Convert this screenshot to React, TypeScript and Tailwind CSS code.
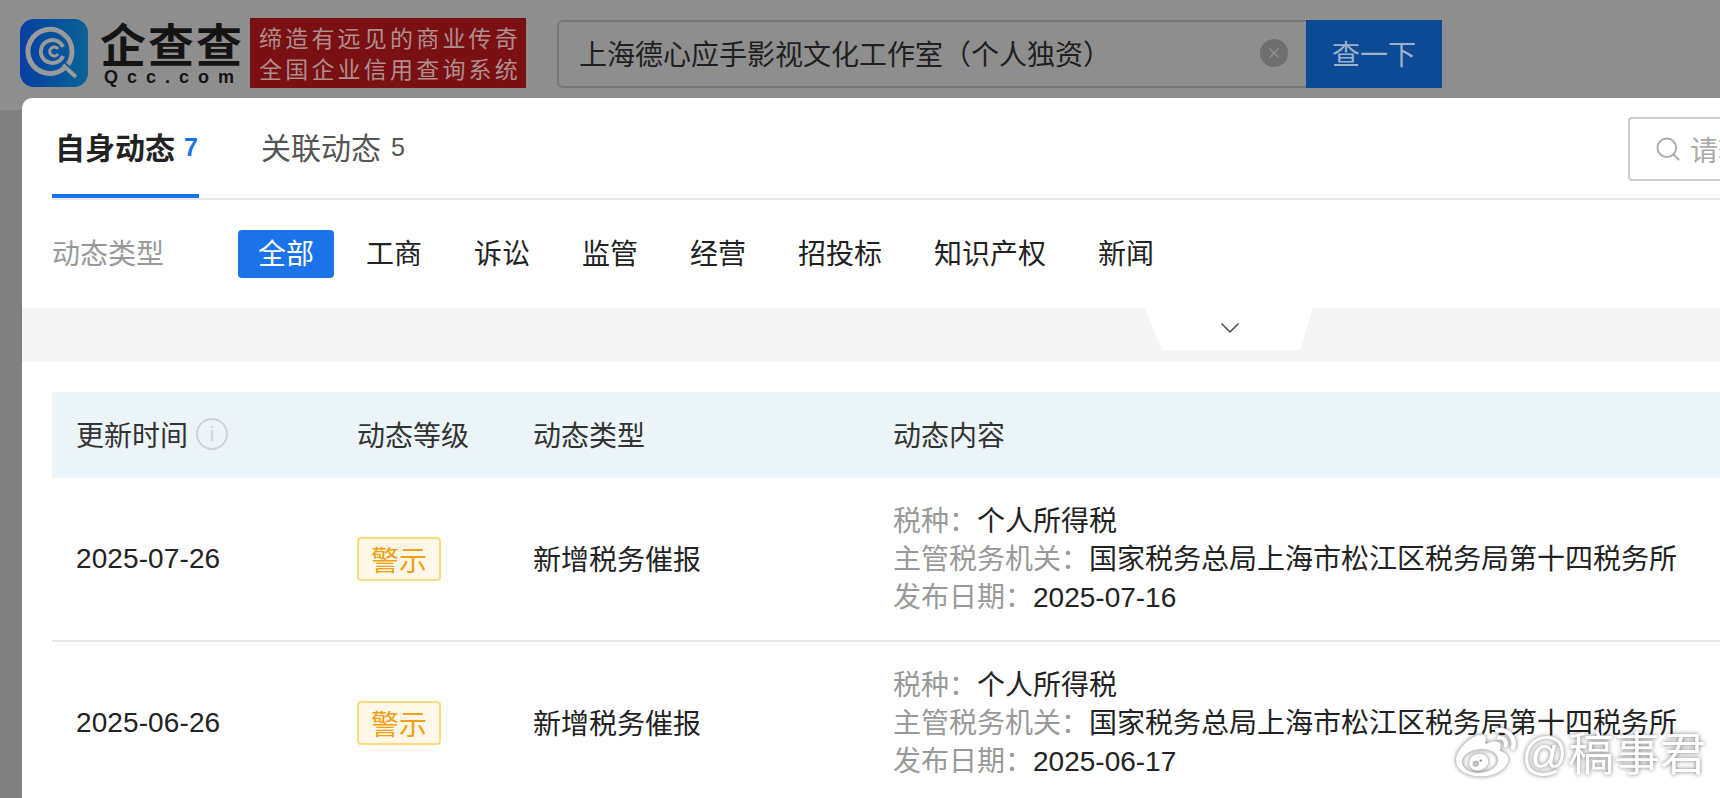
import React from 'react';
import { ChevronDown, Search, X } from 'lucide-react';
import { FaWeibo } from 'react-icons/fa';

const filters = ['全部', '工商', '诉讼', '监管', '经营', '招投标', '知识产权', '新闻'];

const rows = [
  { time: '2025-07-26', published: '2025-07-16' },
  { time: '2025-06-26', published: '2025-06-17' },
];

const LogoMark = () => (
  <div className="h-[68px] w-[68px] shrink-0 rounded-[14px] bg-gradient-to-r from-[#0a3ea3] to-[#0c6296]">
    <svg viewBox="0 0 68 68" className="h-full w-full" fill="none" stroke="#9a9a9a">
      <path d="M45 48.5A22 22 0 1 1 52 33a22 22 0 0 1-4 12.5" strokeWidth="5" />
      <path d="M43 37a11.5 11.5 0 1 1 0-9" strokeWidth="4" />
      <path d="M38 35a4.5 4.5 0 1 1 0-5" strokeWidth="3" />
      <path d="M43 46l13 12" strokeWidth="4" />
    </svg>
  </div>
);

const Header = () => (
  <header className="flex h-[110px] items-start bg-[#8e8e8e] pl-5 pt-[18px]">
    <div className="mt-px flex">
      <LogoMark />
      <div className="ml-3 flex w-[140px] flex-col">
        <div className="h-[46px] text-[46px] leading-[46px] font-bold tracking-[2px] whitespace-nowrap text-[#141414]">企查查</div>
        <div className="ml-[4px] mt-[3px] font-['Liberation_Sans',sans-serif] text-[18px] leading-[18px] font-bold tracking-[9px] whitespace-nowrap text-[#141414]">Qcc.com</div>
      </div>
    </div>
    <div className="ml-[10px] flex h-[70px] w-[276px] flex-col justify-center bg-[#7a0f14] pl-[9px] text-[23px] leading-[31px] tracking-[3.2px] whitespace-nowrap text-[#ae8f8f]">
      <div>缔造有远见的商业传奇</div>
      <div>全国企业信用查询系统</div>
    </div>
    <div className="ml-[31px] flex h-[70px] items-start">
      <div className="mt-[2px] flex h-[68px] w-[749px] items-center rounded-l-[6px] border-2 border-r-0 border-[#777777] pb-[2px] pl-[20px] pr-[18px]">
        <span className="flex-1 text-[28px] whitespace-nowrap text-[#1f1f1f]">上海德心应手影视文化工作室（个人独资）</span>
        <span className="flex h-[28px] w-[28px] items-center justify-center rounded-full bg-[#6f6f6f]">
          <X size={16} strokeWidth={2} className="text-[#929292]" />
        </span>
      </div>
      <div className="mt-[2px] flex h-[68px] w-[136px] items-center justify-center bg-[#0b4a94] pb-[2px] text-[28px] text-[#9fb0c8]">查一下</div>
    </div>
  </header>
);

const Tabs = () => (
  <div className="flex h-[102px] items-start border-b-2 border-[#e9e9e9]">
    <div className="flex h-[100px] w-[147px] shrink-0 items-center border-b-4 border-[#1a73e8] pl-[3px] whitespace-nowrap">
      <span className="text-[30px] font-bold text-[#222222]">自身动态</span>
      <span className="ml-[9px] mt-[4px] font-['Liberation_Sans',sans-serif] text-[25px] font-bold text-[#1a73e8]">7</span>
    </div>
    <div className="ml-[62px] flex h-[96px] w-[150px] shrink-0 items-center whitespace-nowrap">
      <span className="text-[30px] text-[#555555]">关联动态</span>
      <span className="ml-[10px] mt-[4px] font-['Liberation_Sans',sans-serif] text-[25px] text-[#555555]">5</span>
    </div>
    <div className="ml-[1217px] mt-[19px] flex h-[64px] w-[300px] shrink-0 items-center rounded-[4px] border-2 border-[#cccccc] pl-[24px]">
      <Search size={28} strokeWidth={1.6} className="shrink-0 text-[#a9a9a9]" />
      <span className="ml-[8px] text-[28px] whitespace-nowrap text-[#a9a9a9]">请输入关键词</span>
    </div>
  </div>
);

const FilterRow = () => (
  <div className="flex h-[108px] items-start pl-[30px] pt-[30px]">
    <div className="flex h-[48px] w-[186px] items-center pb-[4px] text-[28px] text-[#999999]">动态类型</div>
    <div className="flex gap-3">
      {filters.map((f, i) => (
        <div
          key={f}
          className={
            i === 0
              ? 'flex h-[48px] items-center rounded-[4px] bg-[#1a73e8] px-5 pb-[4px] text-[28px] text-white'
              : 'flex h-[48px] items-center px-5 pb-[4px] text-[28px] text-[#222222]'
          }
        >
          {f}
        </div>
      ))}
    </div>
  </div>
);

const ExpandBand = () => (
  <div className="relative h-[54px] bg-[#f5f5f5]">
    <svg viewBox="0 0 168 42" className="absolute left-[1123px] top-0 h-[42px] w-[168px]">
      <path d="M0 0H168L155 42H17Z" fill="#ffffff" />
    </svg>
    <ChevronDown size={32} strokeWidth={1.3} className="absolute left-[1192px] top-[4px] text-[#555555]" />
  </div>
);

const Info = () => (
  <span className="ml-[8px] flex h-[32px] w-[32px] items-center justify-center rounded-full border-2 border-[#cfd3d6] font-['Liberation_Sans',sans-serif] text-[20px] leading-none text-[#cfd3d6]">
    i
  </span>
);

const Table = () => (
  <div className="ml-[30px] mt-[30px]">
    <div className="flex h-[86px] items-center bg-[#ecf5f9] pb-[2px] text-[28px] text-[#333333]">
      <div className="flex w-[305px] items-center pl-[24px]">
        更新时间
        <Info />
      </div>
      <div className="w-[176px]">动态等级</div>
      <div className="w-[360px]">动态类型</div>
      <div>动态内容</div>
    </div>
    {rows.map((row) => (
      <div key={row.time} className="flex h-[164px] items-center border-b-2 border-[#e9e9e9] text-[28px] text-[#222222]">
        <div className="w-[305px] pl-[24px] font-['Liberation_Sans',sans-serif] tracking-[0.1px]">{row.time}</div>
        <div className="w-[176px]">
          <span className="flex h-[44px] w-[84px] items-center justify-center rounded-[4px] border-2 border-[#fddc80] bg-[#fff8e8] text-[28px] text-[#f0a010]">
            警示
          </span>
        </div>
        <div className="w-[360px] pb-[3px]">新增税务催报</div>
        <div className="pb-[2px] text-[28px] leading-[38px] whitespace-nowrap">
          <div>
            <span className="text-[#999999]">税种：</span>个人所得税
          </div>
          <div>
            <span className="text-[#999999]">主管税务机关：</span>国家税务总局上海市松江区税务局第十四税务所
          </div>
          <div>
            <span className="text-[#999999]">发布日期：</span>
            <span className="font-['Liberation_Sans',sans-serif]">{row.published}</span>
          </div>
        </div>
      </div>
    ))}
  </div>
);

const Watermark = () => (
  <div className="absolute bottom-[14px] right-[14px] flex items-center text-white drop-shadow-[0_0_2px_rgba(0,0,0,0.55)]">
    <FaWeibo size={60} />
    <span className="ml-[5px] font-['Liberation_Sans','Noto_Sans_CJK_SC',sans-serif] text-[46px] leading-[50px] whitespace-nowrap">@稿事君</span>
  </div>
);

export default function App() {
  return (
    <div className="relative h-[798px] w-[1720px] overflow-hidden bg-[#808080] font-['Noto_Sans_CJK_SC',sans-serif]">
      <Header />
      <div className="absolute left-[22px] right-0 top-[98px] h-[700px] overflow-hidden rounded-tl-[10px] bg-white">
        <div className="pl-[30px]">
          <Tabs />
        </div>
        <FilterRow />
        <ExpandBand />
        <Table />
      </div>
      <Watermark />
    </div>
  );
}
